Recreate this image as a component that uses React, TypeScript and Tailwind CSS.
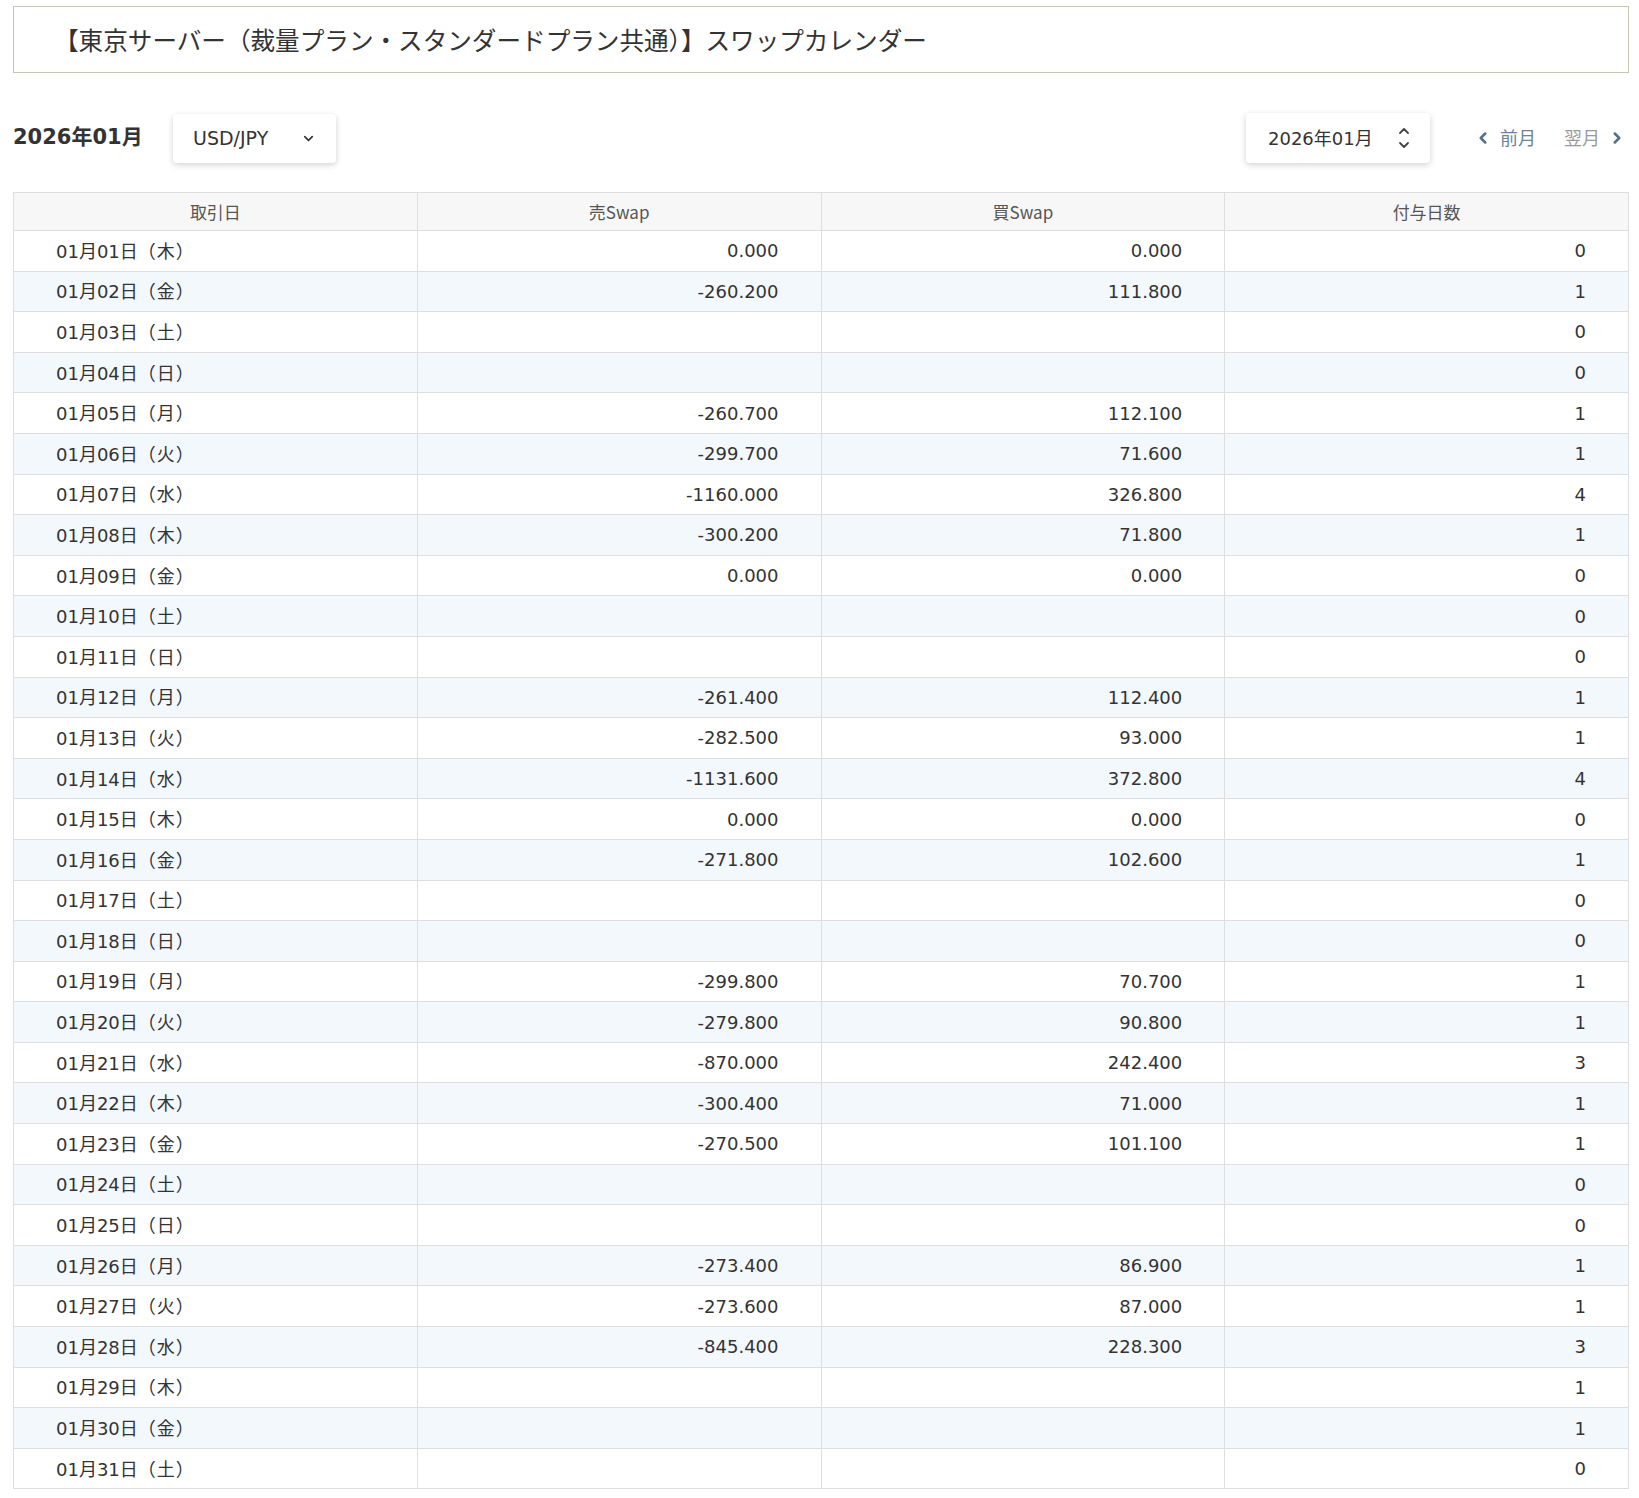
import { ChevronDown, ChevronLeft, ChevronRight } from "lucide-react";

type Row = { day: string; wd: string; sell: string; buy: string; days: number };

const rows: Row[] = [
  { day: "01月01日", wd: "木", sell: "0.000", buy: "0.000", days: 0 },
  { day: "01月02日", wd: "金", sell: "-260.200", buy: "111.800", days: 1 },
  { day: "01月03日", wd: "土", sell: "", buy: "", days: 0 },
  { day: "01月04日", wd: "日", sell: "", buy: "", days: 0 },
  { day: "01月05日", wd: "月", sell: "-260.700", buy: "112.100", days: 1 },
  { day: "01月06日", wd: "火", sell: "-299.700", buy: "71.600", days: 1 },
  { day: "01月07日", wd: "水", sell: "-1160.000", buy: "326.800", days: 4 },
  { day: "01月08日", wd: "木", sell: "-300.200", buy: "71.800", days: 1 },
  { day: "01月09日", wd: "金", sell: "0.000", buy: "0.000", days: 0 },
  { day: "01月10日", wd: "土", sell: "", buy: "", days: 0 },
  { day: "01月11日", wd: "日", sell: "", buy: "", days: 0 },
  { day: "01月12日", wd: "月", sell: "-261.400", buy: "112.400", days: 1 },
  { day: "01月13日", wd: "火", sell: "-282.500", buy: "93.000", days: 1 },
  { day: "01月14日", wd: "水", sell: "-1131.600", buy: "372.800", days: 4 },
  { day: "01月15日", wd: "木", sell: "0.000", buy: "0.000", days: 0 },
  { day: "01月16日", wd: "金", sell: "-271.800", buy: "102.600", days: 1 },
  { day: "01月17日", wd: "土", sell: "", buy: "", days: 0 },
  { day: "01月18日", wd: "日", sell: "", buy: "", days: 0 },
  { day: "01月19日", wd: "月", sell: "-299.800", buy: "70.700", days: 1 },
  { day: "01月20日", wd: "火", sell: "-279.800", buy: "90.800", days: 1 },
  { day: "01月21日", wd: "水", sell: "-870.000", buy: "242.400", days: 3 },
  { day: "01月22日", wd: "木", sell: "-300.400", buy: "71.000", days: 1 },
  { day: "01月23日", wd: "金", sell: "-270.500", buy: "101.100", days: 1 },
  { day: "01月24日", wd: "土", sell: "", buy: "", days: 0 },
  { day: "01月25日", wd: "日", sell: "", buy: "", days: 0 },
  { day: "01月26日", wd: "月", sell: "-273.400", buy: "86.900", days: 1 },
  { day: "01月27日", wd: "火", sell: "-273.600", buy: "87.000", days: 1 },
  { day: "01月28日", wd: "水", sell: "-845.400", buy: "228.300", days: 3 },
  { day: "01月29日", wd: "木", sell: "", buy: "", days: 1 },
  { day: "01月30日", wd: "金", sell: "", buy: "", days: 1 },
  { day: "01月31日", wd: "土", sell: "", buy: "", days: 0 },
];

const UpDown = () => (
  <svg width="12" height="26" viewBox="0 0 12 26" fill="none" stroke="#444" strokeWidth="1.8" strokeLinecap="round" strokeLinejoin="round">
    <path d="M2 8 L6 4 L10 8" />
    <path d="M2 18 L6 22 L10 18" />
  </svg>
);

const cell = "border border-[#dedede]";

export default function App() {
  return (
    <div className="pl-[13px] pr-[10px] pt-[6px] pb-8 bg-white text-[#333] font-['DejaVu_Sans','Noto_Sans_CJK_JP',sans-serif]">
      <div className="h-[67px] border border-[#c8c5b0] flex items-center pl-[40px] text-[24.6px] font-['Noto_Sans_CJK_JP',sans-serif]">
        【東京サーバー（裁量プラン・スタンダードプラン共通）】スワップカレンダー
      </div>

      <div className="mt-[40px] h-[50px] flex items-center">
        <h2 className="text-[21px] font-bold w-[160px]">2026年01月</h2>
        <div className="h-[49px] w-[163px] bg-white rounded-[4px] shadow-[0_2px_6px_rgba(0,0,0,0.18)] flex items-center justify-between pl-[20px] pr-[20px] text-[19px]">
          <span>USD/JPY</span>
          <ChevronDown size={15} strokeWidth={2.6} className="text-[#333]" />
        </div>

        <div className="ml-auto h-[50px] w-[184px] bg-white rounded-[4px] shadow-[0_2px_6px_rgba(0,0,0,0.18)] flex items-center justify-between pl-[22px] pr-[20px] text-[18px]">
          <span>2026年01月</span>
          <UpDown />
        </div>
        <div className="ml-[44px] flex items-center gap-[8px] text-[18px] text-[#6b8399]">
          <ChevronLeft size={18} strokeWidth={3.4} className="text-[#557089]" />
          <span>前月</span>
        </div>
        <div className="ml-[28px] mr-[3px] flex items-center gap-[8px] text-[18px] text-[#9a9a9a]">
          <span>翌月</span>
          <ChevronRight size={18} strokeWidth={3.4} className="text-[#557089]" />
        </div>
      </div>

      <table className="mt-[29px] w-full table-fixed border-collapse border border-[#dedede] text-[18px]">
        <thead>
          <tr className="h-[38px] bg-[#f7f7f7] text-[17px] text-[#555] font-['Noto_Sans_CJK_JP',sans-serif]">
            <th className={`font-normal ${cell}`}>取引日</th>
            <th className={`font-normal ${cell}`}>売Swap</th>
            <th className={`font-normal ${cell}`}>買Swap</th>
            <th className={`font-normal ${cell}`}>付与日数</th>
          </tr>
        </thead>
        <tbody>
          {rows.map((r, i) => (
            <tr key={r.day} className={i % 2 === 1 ? "h-[40.6px] bg-[#f3f8fd]" : "h-[40.6px] bg-white"}>
              <td className={`${cell} pl-[42px]`}>
                {r.day}
                <span className="font-['Noto_Sans_CJK_JP',sans-serif] tracking-[1px]">（{r.wd}）</span>
              </td>
              <td className={`${cell} pr-[42px] text-right`}>{r.sell}</td>
              <td className={`${cell} pr-[42px] text-right`}>{r.buy}</td>
              <td className={`${cell} pr-[42px] text-right`}>{r.days}</td>
            </tr>
          ))}
        </tbody>
      </table>
    </div>
  );
}
